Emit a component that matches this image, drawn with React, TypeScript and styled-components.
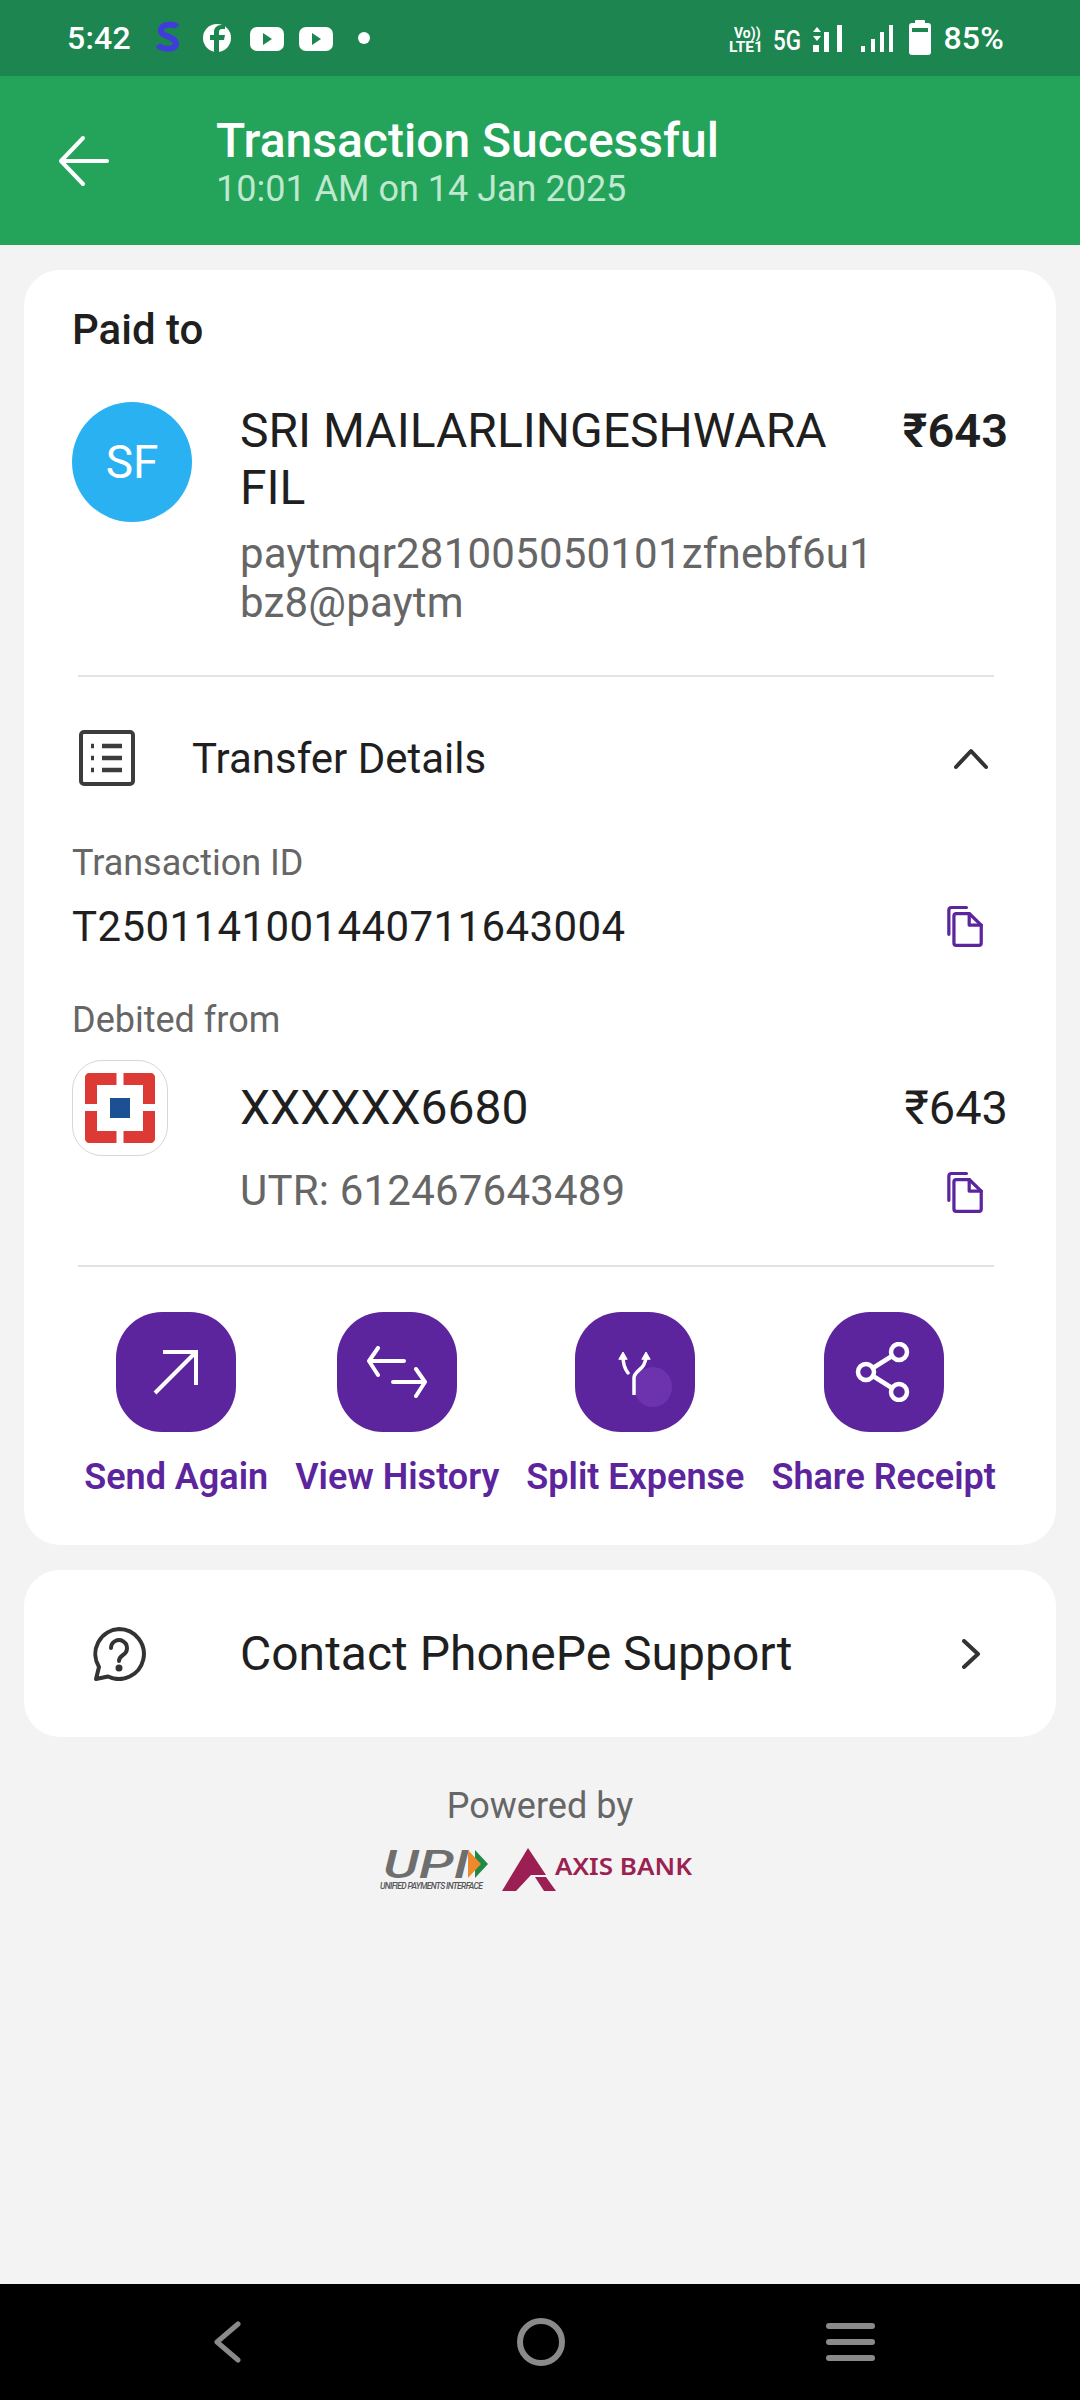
import { ReactNode } from 'react';
import styled, { createGlobalStyle } from 'styled-components';

const GlobalStyle = createGlobalStyle`
  html, body {
    margin: 0;
    padding: 0;
    background: #f3f3f4;
    font-family: Roboto, "Noto Sans", "DejaVu Sans", sans-serif;
  }
  * { box-sizing: border-box; }
`

const Screen = styled.div`
  width: 1080px;
  height: 2400px;
  display: flex;
  flex-direction: column;
  background: #f3f3f4;
  overflow: hidden;
`
const StatusBar = styled.div`
  height: 76px;
  flex: none;
  background: #1d8550;
  color: #fff;
  display: flex;
  align-items: center;
  justify-content: space-between;
  padding: 0 76px 0 67px;
`
const StatusGroup = styled.div`
  display: flex;
  align-items: center;
`
const StatusText = styled.span`
  font-size: 32px;
  font-weight: 500;
  letter-spacing: 0.2px;
`
const NotifyIcons = styled.svg`
  margin-left: 16px;
`
const NotifyDot = styled.svg`
  margin-left: 14px;
`
const BatteryText = styled(StatusText)`
  margin-left: 12px;
`
const Header = styled.header`
  height: 169px;
  flex: none;
  background: #24a35a;
  display: flex;
  align-items: center;
  padding: 0 0 0 58px;
`
const BackButton = styled.div`
  width: 158px;
  display: flex;
`
const HeaderTitle = styled.div`
  color: #fff;
  font-size: 48px;
  font-weight: 500;
  line-height: 56px;
`
const HeaderSub = styled.div`
  color: #bfe8cf;
  font-size: 36px;
  line-height: 40px;
`
const Content = styled.main`
  flex: 1;
  padding: 25px 24px 0;
  display: flex;
  flex-direction: column;
  gap: 25px;
`
const Card = styled.section`
  background: #fff;
  border-radius: 36px;
`
const DetailCard = styled(Card)`
  height: 1275px;
  padding: 0 48px;
`
const PaidTo = styled.div`
  color: #1f1f1f;
  font-size: 42px;
  font-weight: 500;
  line-height: 48px;
  padding-top: 36px;
`
const PayeeRow = styled.div`
  display: flex;
  align-items: flex-start;
  margin-top: 48px;
`
const Avatar = styled.div`
  width: 120px;
  height: 120px;
  flex: none;
  border-radius: 50%;
  background: #29b1f2;
  color: #fff;
  font-size: 46px;
  display: flex;
  align-items: center;
  justify-content: center;
`
const PayeeInfo = styled.div`
  width: 640px;
  margin-left: 48px;
`
const PayeeName = styled.div`
  color: #1f1f1f;
  font-size: 48px;
  line-height: 57px;
`
const PayeeVpa = styled.div`
  color: #666;
  font-size: 42px;
  line-height: 49px;
  margin-top: 13px;
  letter-spacing: 0.2px;
  word-break: break-all;
`
const PayeeAmount = styled.div`
  margin-left: auto;
  color: #1f1f1f;
  font-size: 47px;
  font-weight: 600;
  line-height: 57px;
  white-space: nowrap;
`
const Divider = styled.div<{ $top: number }>`
  height: 2px;
  background: #e3e3e3;
  margin: ${p => p.$top}px 14px 0 6px;
`
const SectionRow = styled.div`
  display: flex;
  align-items: center;
  height: 58px;
  margin-top: 52px;
  padding: 0 18px 0 6px;
`
const SectionTitle = styled.div`
  flex: 1;
  margin-left: 56px;
  color: #1f1f1f;
  font-size: 42px;
`
const FieldLabel = styled.div<{ $top: number }>`
  color: #666;
  font-size: 36px;
  line-height: 42px;
  margin-top: ${p => p.$top}px;
`
const FieldRow = styled.div`
  display: flex;
  align-items: center;
  justify-content: space-between;
  height: 50px;
  margin-top: 17px;
  padding-right: 24px;
`
const FieldValue = styled.div`
  color: #1f1f1f;
  font-size: 42px;
  letter-spacing: 0.4px;
`
const BankRow = styled.div`
  display: grid;
  grid-template-columns: 168px 1fr auto;
  margin-top: 19px;
  height: 160px;
`
const BankLogo = styled.div`
  width: 96px;
  height: 96px;
  border: 1.5px solid #d6d8d8;
  border-radius: 30px;
  display: flex;
  align-items: center;
  justify-content: center;
`
const BankInfo = styled.div`
  display: flex;
  flex-direction: column;
  padding-top: 20px;
`
const BankAccount = styled.div`
  color: #1f1f1f;
  font-size: 48px;
  line-height: 56px;
`
const UtrText = styled.div`
  color: #666;
  font-size: 42px;
  line-height: 48px;
  margin-top: 31px;
  letter-spacing: 0.2px;
`
const BankAmountCol = styled.div`
  display: flex;
  flex-direction: column;
  align-items: flex-end;
  padding-top: 20px;
`
const BankAmount = styled.div`
  color: #1f1f1f;
  font-size: 47px;
  line-height: 56px;
`
const UtrCopy = styled.div`
  margin-top: 34px;
  margin-right: 24px;
`
const ActionRow = styled.div`
  display: flex;
  justify-content: center;
  gap: 27px;
  margin-top: 45px;
`
const Action = styled.div`
  display: flex;
  flex-direction: column;
  align-items: center;
  gap: 23px;
`
const ActionIcon = styled.div`
  position: relative;
  width: 120px;
  height: 120px;
  border-radius: 46px;
  background: #5c249d;
  display: flex;
  align-items: center;
  justify-content: center;
`
const TouchMark = styled.div`
  position: absolute;
  left: 59px;
  top: 55px;
  width: 38px;
  height: 40px;
  border-radius: 50%;
  background: #6d33ae;
`
const ActionIconSvg = styled.svg`
  position: relative;
`
const ActionLabel = styled.div`
  color: #5c249d;
  font-size: 36px;
  font-weight: 600;
  line-height: 44px;
  white-space: nowrap;
`
const SupportCard = styled(Card)`
  height: 167px;
  display: flex;
  align-items: center;
  padding: 0 70px 0 68px;
`
const SupportText = styled.div`
  flex: 1;
  margin-left: 94px;
  color: #1f1f1f;
  font-size: 48px;
`
const Powered = styled.div`
  margin-top: 22px;
  display: flex;
  flex-direction: column;
  align-items: center;
`
const PoweredText = styled.div`
  color: #666;
  font-size: 36px;
  line-height: 44px;
`
const LogoRow = styled.div`
  display: flex;
  align-items: center;
  margin-top: 16px;
  gap: 14px;
`
const NavBar = styled.nav`
  height: 116px;
  flex: none;
  background: #000;
  display: grid;
  grid-template-columns: 304px 309px 49px;
  padding-left: 213px;
  align-items: center;
  justify-items: start;
`
const NavHome = styled.div`
  width: 48px;
  height: 48px;
  border: 6px solid #8a8a8a;
  border-radius: 50%;
`

const Stroke = ({ size, w = 4, color = '#fff', children }: { size: number; w?: number; color?: string; children: ReactNode }) => (
  <svg width={size} height={size} viewBox={`0 0 ${size} ${size}`} fill="none" stroke={color} strokeWidth={w} strokeLinecap="round" strokeLinejoin="round">
    {children}
  </svg>
)

const CopyIcon = () => (
  <svg width="37" height="44" viewBox="0 0 40 46" fill="none" stroke="#5c249d" strokeWidth="3.5" strokeLinejoin="round" strokeLinecap="round">
    <path d="M2 32V6c0-2 1-3 3-3h16" />
    <path d="M10 44c-1.500 0-2.500-1-2.500-2.500V12c0-1.500 1-2.500 2.500-2.500h14L37 22v19.500c0 1.500-1 2.500-2.500 2.500z" />
    <path d="M24 9.500V22h13" />
  </svg>
)

function App() {
  return (
    <Screen>
      <GlobalStyle />
      <StatusBar>
        <StatusGroup>
          <StatusText>5:42</StatusText>
          <NotifyIcons width="196" height="40" viewBox="0 0 196 40">
            <path d="M30 9c-2-3-15-4-16 3-1 7 15 6 15 14 0 6-14 6-18 1" fill="none" stroke="#3f3bdc" strokeWidth="6" />
            <circle cx="70" cy="20" r="14" fill="#fff" />
            <path d="M72 34V22h5l1-5h-6v-3c0-2 1-3 3-3h3V7h-4c-4 0-7 3-7 7v3h-4v5h4v12z" fill="#1d8550" />
            <rect x="103" y="9" width="34" height="24" rx="7" fill="#fff" />
            <path d="M116 15l9 6-9 6z" fill="#1d8550" />
            <rect x="152" y="9" width="34" height="24" rx="7" fill="#fff" />
            <path d="M165 15l9 6-9 6z" fill="#1d8550" />
          </NotifyIcons>
          <NotifyDot width="14" height="14"><circle cx="7" cy="7" r="6" fill="#fff" /></NotifyDot>
        </StatusGroup>
        <StatusGroup>
          <svg width="202" height="46" viewBox="0 0 202 46">
            <text x="5" y="23" fontSize="14" fontWeight="700" fill="#fff" fontFamily="Roboto, sans-serif">Vo))</text>
            <text x="0" y="37" fontSize="15" fontWeight="700" fill="#fff" fontFamily="Roboto, sans-serif" textLength="34" lengthAdjust="spacingAndGlyphs">LTE1</text>
            <text x="44" y="35" fontSize="27" fontWeight="500" fill="#fff" textLength="28" lengthAdjust="spacingAndGlyphs" fontFamily="Roboto, sans-serif">5G</text>
            <path d="M84 17l4-5 4 5zM84 21l4 5 4-5z" fill="#fff" />
            <rect x="84" y="30" width="6" height="7" fill="#fff" />
            <rect x="95" y="17" width="5" height="20" fill="#fff" />
            <rect x="108" y="10" width="5" height="27" fill="#fff" />
            <rect x="132" y="31" width="4" height="6" fill="#fff" />
            <rect x="142" y="24" width="4" height="13" fill="#fff" />
            <rect x="151" y="17" width="4" height="20" fill="#fff" />
            <rect x="160" y="10" width="4" height="27" fill="#fff" />
            <rect x="186" y="5" width="10" height="5" rx="1" fill="#fff" />
            <rect x="180" y="8" width="22" height="32" rx="3" fill="#fff" />
            <rect x="183" y="13" width="16" height="4" fill="#1d8550" />
          </svg>
          <BatteryText>85%</BatteryText>
        </StatusGroup>
      </StatusBar>
      <Header>
        <BackButton>
          <Stroke size={52} w={4}>
            <path d="M3 26h46M25 3L3 26l22 23" />
          </Stroke>
        </BackButton>
        <div>
          <HeaderTitle>Transaction Successful</HeaderTitle>
          <HeaderSub>10:01 AM on 14 Jan 2025</HeaderSub>
        </div>
      </Header>
      <Content>
        <DetailCard>
          <PaidTo>Paid to</PaidTo>
          <PayeeRow>
            <Avatar>SF</Avatar>
            <PayeeInfo>
              <PayeeName>SRI MAILARLINGESHWARA FIL</PayeeName>
              <PayeeVpa>paytmqr281005050101zfnebf6u1bz8@paytm</PayeeVpa>
            </PayeeInfo>
            <PayeeAmount>₹643</PayeeAmount>
          </PayeeRow>
          <Divider $top={48} />
          <SectionRow>
            <Stroke size={58} w={4} color="#3c3c3c">
              <rect x="3" y="3" width="52" height="52" rx="3" />
              <path d="M13 17h3M24 17h20M13 29h3M24 29h20M13 41h3M24 41h20" strokeWidth="4.500" strokeLinecap="butt" />
            </Stroke>
            <SectionTitle>Transfer Details</SectionTitle>
            <Stroke size={38} w={4} color="#333">
              <path d="M4 28L19 12l15 16" />
            </Stroke>
          </SectionRow>
          <FieldLabel $top={55}>Transaction ID</FieldLabel>
          <FieldRow>
            <FieldValue>T2501141001440711643004</FieldValue>
            <CopyIcon />
          </FieldRow>
          <FieldLabel $top={48}>Debited from</FieldLabel>
          <BankRow>
            <BankLogo>
              <svg width="70" height="70" viewBox="0 0 70 70">
                <path d="M4 0h27.500v12H12v19H0V4c0-2 2-4 4-4zM38.500 0H66c2 0 4 2 4 4v27H58V12H38.500zM0 38h12v20h19.500v12H4c-2 0-4-2-4-4zM58 38h12v28c0 2-2 4-4 4H38.500V58H58z" fill="#de3a35" />
                <rect x="25" y="25" width="20" height="20" fill="#1c4f94" />
              </svg>
            </BankLogo>
            <BankInfo>
              <BankAccount>XXXXXX6680</BankAccount>
              <UtrText>UTR: 612467643489</UtrText>
            </BankInfo>
            <BankAmountCol>
              <BankAmount>₹643</BankAmount>
              <UtrCopy><CopyIcon /></UtrCopy>
            </BankAmountCol>
          </BankRow>
          <Divider $top={45} />
          <ActionRow>
            <Action>
              <ActionIcon>
                <Stroke size={46} w={4}>
                  <path d="M2 44L43 3M10 3h33v33" strokeLinecap="butt" strokeLinejoin="miter" />
                </Stroke>
              </ActionIcon>
              <ActionLabel>Send Again</ActionLabel>
            </Action>
            <Action>
              <ActionIcon>
                <svg width="62" height="52" viewBox="0 0 62 52" fill="none" stroke="#fff" strokeWidth="4" strokeLinecap="round" strokeLinejoin="round">
                  <path d="M3 15h35M12 2L3 15l9 14M27 36h32M50 23l9 13-9 14" />
                </svg>
              </ActionIcon>
              <ActionLabel>View History</ActionLabel>
            </Action>
            <Action>
              <ActionIcon>
                <TouchMark />
                <ActionIconSvg width="38" height="46" viewBox="0 0 38 46" fill="none" stroke="#fff" strokeWidth="3.500" strokeLinecap="round">
                  <path d="M18 45V29c0-8 12-8 12-22M7 7c0 8 1 12 5 17" />
                  <path d="M3 10l4-7 4 7zM26 10l4-7 4 7z" fill="#fff" strokeWidth="1" strokeLinejoin="round" />
                </ActionIconSvg>
              </ActionIcon>
              <ActionLabel>Split Expense</ActionLabel>
            </Action>
            <Action>
              <ActionIcon>
                <Stroke size={60} w={4.5}>
                  <circle cx="45" cy="10" r="8" />
                  <circle cx="12" cy="30" r="8" />
                  <circle cx="45" cy="50" r="8" />
                  <path d="M19 26l19-12M19 34l19 12" />
                </Stroke>
              </ActionIcon>
              <ActionLabel>Share Receipt</ActionLabel>
            </Action>
          </ActionRow>
        </DetailCard>
        <SupportCard>
          <svg width="54" height="54" viewBox="0 0 54 54" fill="none" stroke="#333" strokeWidth="4" strokeLinecap="round" strokeLinejoin="round">
            <path d="M27 2a25 25 0 1 1-11 47.500L4 52l3-12A25 25 0 0 1 27 2z" />
            <path d="M19 21a8 8 0 1 1 12 7c-3 2-4 3-4 6" />
            <circle cx="27" cy="41" r="1.500" fill="#333" />
          </svg>
          <SupportText>Contact PhonePe Support</SupportText>
          <Stroke size={30} w={4} color="#333">
            <path d="M8 2l14 13L8 28" />
          </Stroke>
        </SupportCard>
        <Powered>
          <PoweredText>Powered by</PoweredText>
          <LogoRow>
            <svg width="108" height="52" viewBox="0 -6 108 52">
              <text x="3" y="28" fontSize="38" fontWeight="500" fontStyle="italic" fill="#6e6e6e" fontFamily="Roboto, sans-serif" textLength="86" lengthAdjust="spacingAndGlyphs">UPI</text>
              <path d="M95 0l13 14-13 14z" fill="#1f8a45" />
              <path d="M88 0l13 14-13 14z" fill="#ee8a2b" />
              <text x="0" y="39" fontSize="8.500" fontWeight="500" fontStyle="italic" fill="#555" fontFamily="Roboto, sans-serif" textLength="103">UNIFIED PAYMENTS INTERFACE</text>
            </svg>
            <svg width="198" height="44" viewBox="0 0 198 44">
              <path d="M26 0l18 27H29L14 43H0zM33 29h11l10 14H42z" fill="#9b1f52" />
              <text x="53" y="27" fontSize="23" fontWeight="600" fill="#9b2150" fontFamily="'Noto Sans', sans-serif" textLength="137" lengthAdjust="spacingAndGlyphs">AXIS BANK</text>
            </svg>
          </LogoRow>
        </Powered>
      </Content>
      <NavBar>
        <svg width="28" height="42" viewBox="0 0 28 42" fill="none" stroke="#8a8a8a" strokeWidth="5" strokeLinecap="round" strokeLinejoin="round">
          <path d="M25 3L4 21l21 18" />
        </svg>
        <NavHome />
        <svg width="49" height="38" viewBox="0 0 49 38" fill="#8a8a8a">
          <rect y="0" width="49" height="6" rx="3" />
          <rect y="16" width="49" height="6" rx="3" />
          <rect y="32" width="49" height="6" rx="3" />
        </svg>
      </NavBar>
    </Screen>
  );
}

export default App;
